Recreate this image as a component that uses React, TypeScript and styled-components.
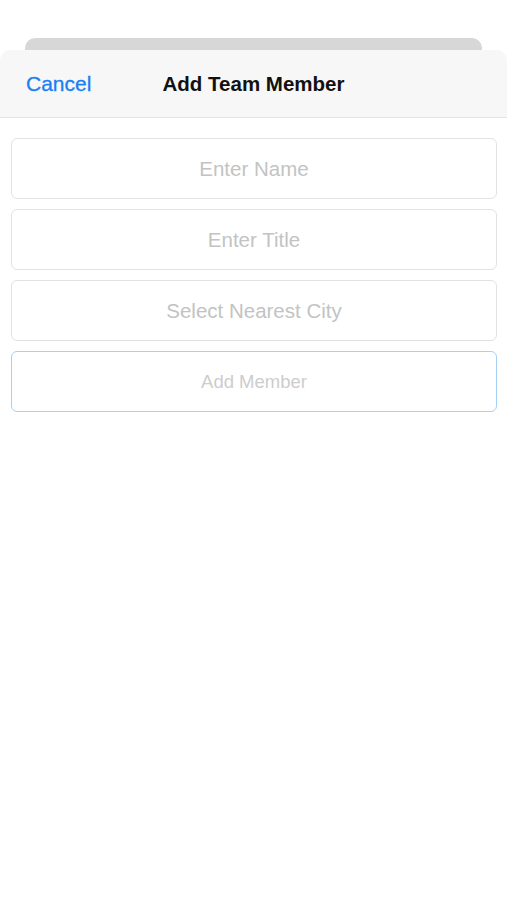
import React from "react";
import styled, { createGlobalStyle } from "styled-components";

const Global = createGlobalStyle`
  html, body { margin: 0; padding: 0; background: #ffffff; }
  body { font-family: "Liberation Sans", Arial, sans-serif; }
  * { box-sizing: border-box; }
`;

const Screen = styled.div`
  width: 507px;
  height: 900px;
  background: #ffffff;
  padding-top: 38px;
  display: flex;
  flex-direction: column;
`;

const BackCard = styled.div`
  margin: 0 25px;
  height: 12px;
  background: #d7d7d7;
  border-radius: 10px 10px 0 0;
`;

const Sheet = styled.div`
  flex: 1;
  background: #ffffff;
  border-radius: 10px 10px 0 0;
  overflow: hidden;
  display: flex;
  flex-direction: column;
`;

const Header = styled.div`
  height: 68px;
  background: #f7f7f7;
  border-bottom: 1px solid #e4e4e4;
  display: grid;
  grid-template-columns: 1fr auto 1fr;
  align-items: center;
  padding: 0 26px;
`;

const CancelButton = styled.button`
  justify-self: start;
  background: none;
  border: none;
  padding: 0;
  font-family: "Liberation Sans", Arial, sans-serif;
  font-size: 21px;
  color: #1a7ff2;
  cursor: pointer;
  -webkit-text-stroke: 0.3px #1a7ff2;
`;

const Title = styled.div`
  font-size: 20.5px;
  font-weight: 700;
  color: #111111;
`;

const Form = styled.div`
  display: flex;
  flex-direction: column;
  gap: 10px;
  padding: 20px 10px 0 11px;
`;

const Field = styled.input`
  height: 61px;
  width: 100%;
  border: 1px solid #e2e2e2;
  border-radius: 6px;
  background: #ffffff;
  text-align: center;
  font-family: "Liberation Sans", Arial, sans-serif;
  font-size: 20.5px;
  color: #333;
  outline: none;
  &::placeholder { color: #c3c3c3; }
`;

const SubmitButton = styled.button`
  height: 61px;
  width: 100%;
  border: 1px solid #a6d0f6;
  border-radius: 6px;
  background: #ffffff;
  font-family: "Liberation Sans", Arial, sans-serif;
  font-size: 18.5px;
  color: #cdcdcd;
`;

export default function App() {
  return (
    <>
      <Global />
      <Screen>
        <BackCard />
        <Sheet>
          <Header>
            <CancelButton>Cancel</CancelButton>
            <Title>Add Team Member</Title>
            <span />
          </Header>
          <Form>
            <Field placeholder="Enter Name" />
            <Field placeholder="Enter Title" />
            <Field placeholder="Select Nearest City" />
            <SubmitButton>Add Member</SubmitButton>
          </Form>
        </Sheet>
      </Screen>
    </>
  );
}
